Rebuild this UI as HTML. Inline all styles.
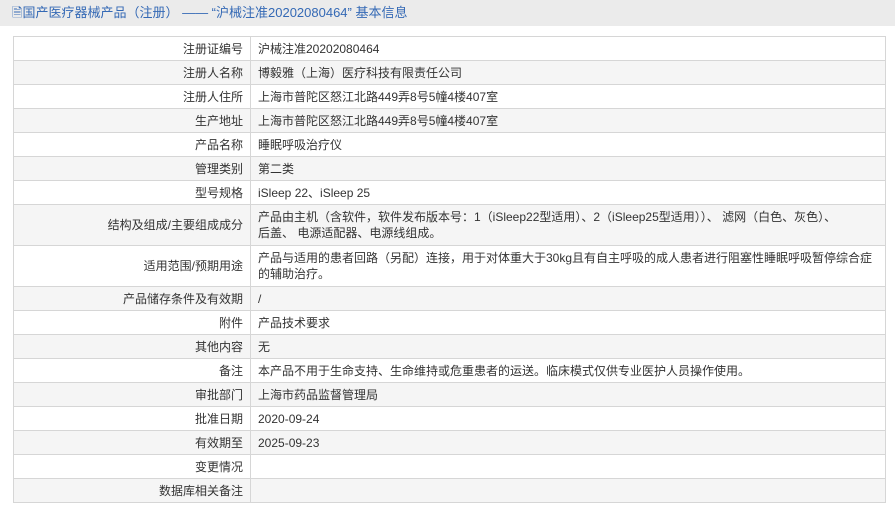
<!DOCTYPE html>
<html><head><meta charset="utf-8"><style>
body{margin:0;width:895px;height:507px;overflow:hidden;background:#fff;font-family:"Liberation Sans","Noto Sans CJK SC",sans-serif;font-size:12px;color:#333}
.hd{height:26px;background:#ebebeb;color:#3469b5;font-size:13px;line-height:26px;padding-left:12px}
table{position:absolute;left:13px;top:36px;width:873px;border-collapse:collapse}
td{border:1px solid #d6d6d6;padding:0 7px;line-height:16px;height:23px}
td.l{width:222px;text-align:right}
tr:nth-child(even) td{background:#f5f5f5}
tr.t td{height:40px}
</style></head><body>
<div class="hd">🗎国产医疗器械产品（注册） —— “沪械注准20202080464” 基本信息</div>
<table>
<tr><td class="l">注册证编号</td><td>沪械注准20202080464</td></tr>
<tr><td class="l">注册人名称</td><td>博毅雅（上海）医疗科技有限责任公司</td></tr>
<tr><td class="l">注册人住所</td><td>上海市普陀区怒江北路449弄8号5幢4楼407室</td></tr>
<tr><td class="l">生产地址</td><td>上海市普陀区怒江北路449弄8号5幢4楼407室</td></tr>
<tr><td class="l">产品名称</td><td>睡眠呼吸治疗仪</td></tr>
<tr><td class="l">管理类别</td><td>第二类</td></tr>
<tr><td class="l">型号规格</td><td>iSleep 22、iSleep 25</td></tr>
<tr class="t"><td class="l">结构及组成/主要组成成分</td><td>产品由主机（含软件，软件发布版本号：1（iSleep22型适用）、2（iSleep25型适用））、 滤网（白色、灰色）、<br>后盖、 电源适配器、电源线组成。</td></tr>
<tr class="t"><td class="l">适用范围/预期用途</td><td>产品与适用的患者回路（另配）连接，用于对体重大于30kg且有自主呼吸的成人患者进行阻塞性睡眠呼吸暂停综合症<br>的辅助治疗。</td></tr>
<tr><td class="l">产品储存条件及有效期</td><td>/</td></tr>
<tr><td class="l">附件</td><td>产品技术要求</td></tr>
<tr><td class="l">其他内容</td><td>无</td></tr>
<tr><td class="l">备注</td><td>本产品不用于生命支持、生命维持或危重患者的运送。临床模式仅供专业医护人员操作使用。</td></tr>
<tr><td class="l">审批部门</td><td>上海市药品监督管理局</td></tr>
<tr><td class="l">批准日期</td><td>2020-09-24</td></tr>
<tr><td class="l">有效期至</td><td>2025-09-23</td></tr>
<tr><td class="l">变更情况</td><td></td></tr>
<tr><td class="l">数据库相关备注</td><td></td></tr>
</table>
</body></html>
